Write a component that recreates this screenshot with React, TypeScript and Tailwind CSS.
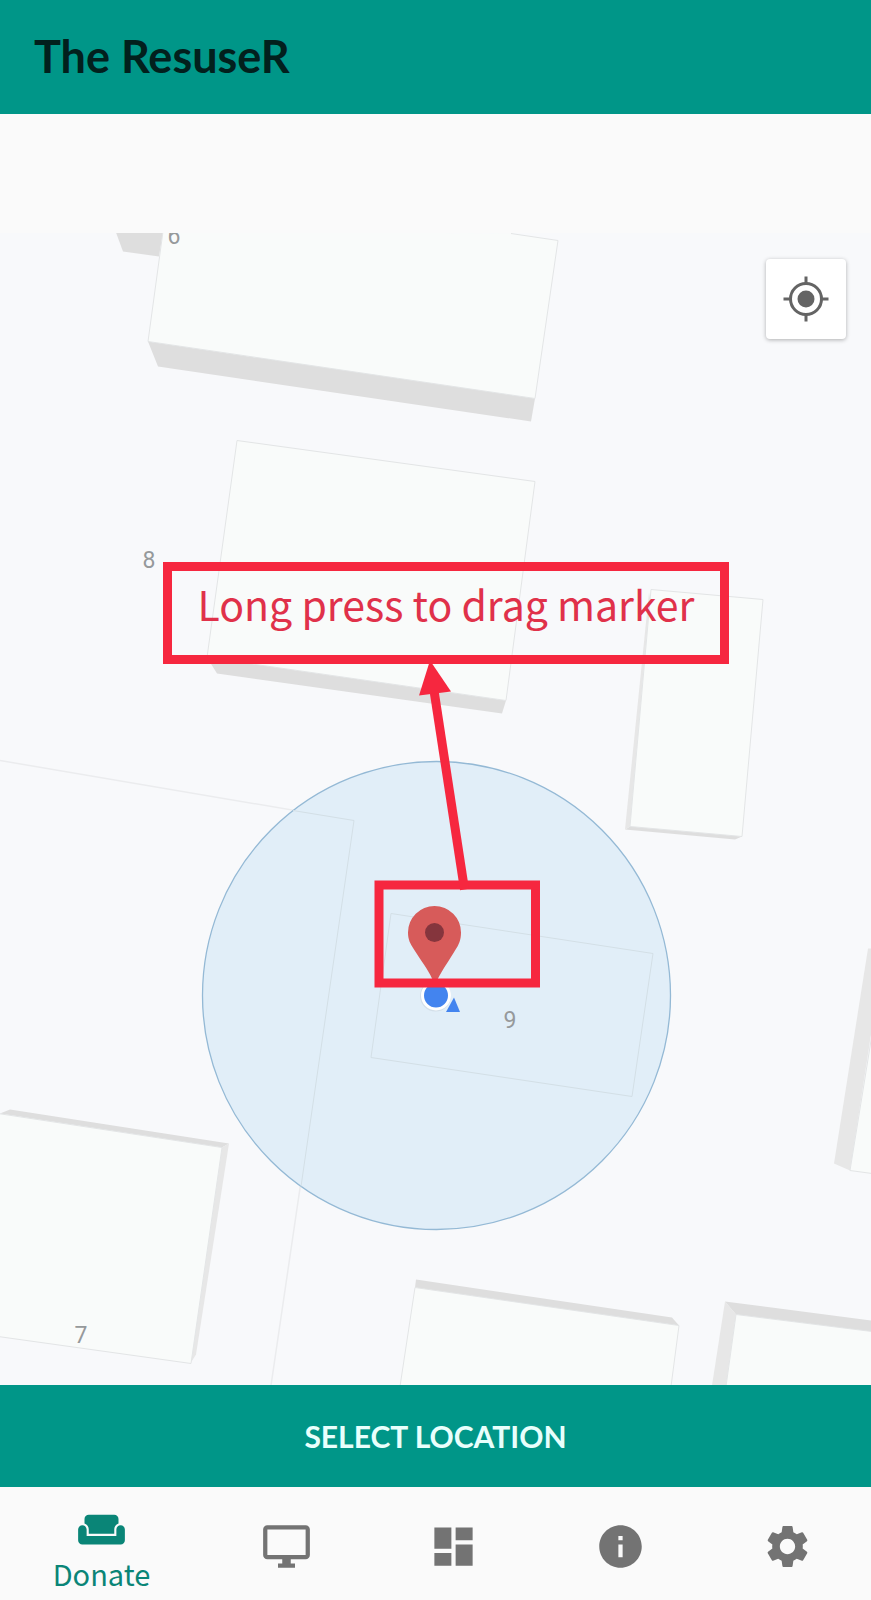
import type { ComponentType } from "react";
import { MdDashboard, MdInfo, MdOutlineDesktopWindows, MdSettings, MdWeekend } from "react-icons/md";

type Tab = { label: string; icon: ComponentType<{ className?: string }> };

const tabs: Tab[] = [
  { label: "Monitor", icon: MdOutlineDesktopWindows },
  { label: "Dashboard", icon: MdDashboard },
  { label: "Info", icon: MdInfo },
  { label: "Settings", icon: MdSettings },
];

function MapDrawing() {
  return (
    <svg
      viewBox="0 232.5 871 1152"
      preserveAspectRatio="xMinYMin slice"
      className="absolute inset-0 h-full w-full"
      role="img"
      aria-label="Map"
    >
      <rect x="0" y="232" width="871" height="1153" fill="#f8f9fb" />
      <g fill="#dedede">
        <path d="M116 232L123 251L159 256L163 232Z" />
        <path d="M148 341L158 366L531 421L535 398Z" />
        <path d="M207 657L217 673L502 713L506 700Z" />
        <path d="M0 1113L10 1109L229 1143L222 1147Z" />
        <path d="M416 1279L672 1317L679 1325L415 1287Z" />
        <path d="M725 1301L871 1320V1331L736 1314Z" />
        <path d="M625 829L735 839L742 836L630 826Z" />
      </g>
      <g fill="#e7e7e7">
        <path d="M649 592L625 829L630 826L650 598Z" />
        <path d="M229 1143L196 1354L191 1362L222 1147Z" />
        <path d="M725 1301L736 1314L726 1385H712Z" />
        <path d="M868 948L834 1163L850 1170L871 1034V948Z" />
      </g>
      <g fill="#f9fbfa" stroke="#e3e5e6" strokeWidth="1">
        <path d="M163 231L148 341L535 398L558 240L511 233" />
        <path d="M237 440L535 481L506 700L207 657Z" />
        <path d="M651 589L763 599L742 836L630 826Z" />
        <path d="M-2 1113L222 1147L191 1363L-2 1336Z" />
        <path d="M415 1287L679 1325L671 1386H400Z" />
        <path d="M872 1331L736 1314L726 1386H872Z" />
        <path d="M872 1034L850 1170L872 1173Z" />
      </g>
      <path d="M0 760L354 820L271 1385" fill="none" stroke="#ebecee" strokeWidth="1.5" />
      <circle cx="436.500" cy="995" r="234" fill="#e1eef8" stroke="#94b9d5" strokeWidth="1.300" />
      <g fill="none" stroke="#d3dfe6" strokeWidth="1">
        <path d="M293 810L354 820L301 1186" />
        <path d="M391 913L653 953L632 1096L371 1057Z" />
      </g>
      <g fill="#96999b" fontSize="23" textAnchor="middle" className="font-['Roboto',sans-serif]">
        <text x="174" y="243.500">6</text>
        <text x="149" y="567">8</text>
        <text x="510" y="1027.500">9</text>
        <text x="81" y="1342">7</text>
      </g>

      <path d="M454 997L460 1011.500H446Z" fill="#4384ef" />
      <circle cx="435.500" cy="995.500" r="15.500" fill="#d3dfe9" />
      <circle cx="436" cy="995" r="15" fill="#fff" />
      <circle cx="436" cy="995" r="12" fill="#4384ef" />
      <path
        d="M435 984L432 978C428 969 421 960 414 949C410 943 408 939 408 932A26.500 26.500 0 0 1 461 932C461 939 459 944 455 950C449 960 442 970 438 978Z"
        fill="#d75b5a"
      />
      <circle cx="434.500" cy="932" r="9.500" fill="#85353d" />

      <g fill="none" stroke="#f6273f" strokeWidth="9">
        <rect x="379" y="884.500" width="156.500" height="98" />
        <path d="M464.500 889L434 690" />
      </g>
      <path d="M430 660L451 691L419 695Z" fill="#f6273f" />
    </svg>
  );
}

export default function App() {
  return (
    <div className="flex min-h-screen w-full flex-col bg-[#fafafa] font-['Lato',sans-serif]">
      <header className="flex h-[114px] items-center bg-[#009688] px-[34px] pb-[2px]">
        <h1 className="text-[45px] leading-none font-bold text-[#02201d]">The ResuseR</h1>
      </header>
      <div className="h-[119px]" />

      <main className="relative min-h-[800px] flex-1 overflow-hidden">
        <MapDrawing />
        <p className="absolute top-[329px] left-[163px] flex h-[102px] w-[566px] justify-center border-[9px] border-[#f6273f] pt-[8px] font-['Noto_Sans_CJK_SC',sans-serif] text-[41px] leading-[48px] whitespace-nowrap text-[#e0314a]">
          Long press to drag marker
        </p>
        <button
          type="button"
          aria-label="My location"
          className="absolute top-[26px] right-[25px] flex size-20 items-center justify-center rounded-[4px] bg-white shadow-[0_1px_4px_rgba(0,0,0,0.3)]"
        >
          <svg viewBox="0 0 46 46" className="size-[46px]" fill="none" stroke="#646464" strokeWidth="3">
            <circle cx="23" cy="23" r="15.500" />
            <circle cx="23" cy="23" r="8.500" fill="#646464" stroke="none" />
            <path d="M23 0.500V7M23 39V45.500M0.500 23H7M39 23H45.500" />
          </svg>
        </button>
      </main>

      <button
        type="button"
        className="flex h-[102px] items-center justify-center bg-[#009688] text-[30px] font-bold text-[#e8fffc]"
      >
        SELECT LOCATION
      </button>

      <nav className="flex h-[113px]">
        <a href="#donate" className="flex w-[203px] flex-col items-center pt-[17px] text-[#0a8577]">
          <MdWeekend className="size-[51px]" />
          <span className="font-['Noto_Sans_CJK_SC',sans-serif] text-[29px] leading-[36px]">Donate</span>
        </a>
        {tabs.map(({ label, icon: Icon }) => (
          <a
            key={label}
            href={`#${label.toLowerCase()}`}
            aria-label={label}
            className="flex flex-1 items-center justify-center pt-[6px] text-[#737373]"
          >
            <Icon className="size-[51px]" />
          </a>
        ))}
      </nav>
    </div>
  );
}
